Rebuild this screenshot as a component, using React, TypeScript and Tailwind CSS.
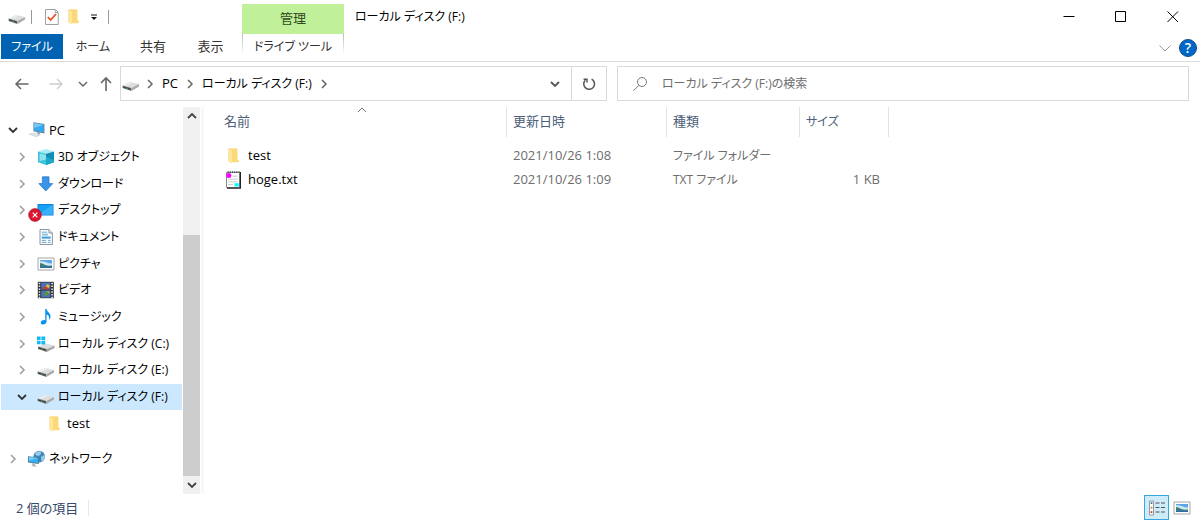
import type { ReactNode } from 'react';

type IconProps = { className?: string };

function DriveIcon({ className = 'size-[18px]' }: IconProps) {
  return (
    <svg viewBox="0 0 18 18" className={className} aria-hidden="true">
      <path d="M0.6 10.6 8.2 7 17 9 9.4 12.9Z" fill="#dedede" />
      <path d="M0.6 10.6 8.2 7 11 7.7 3.4 11.4Z" fill="#ececec" />
      <path d="M0.6 10.6 9.4 12.9V15.9L0.6 13Z" fill="#6e6e6e" />
      <path d="M1.2 11.6 8.6 13.7V14.8L1.2 12.5Z" fill="#3a3a3a" />
      <path d="M9.4 12.9 17 9V11.6L9.4 15.9Z" fill="#a9a9a9" />
      <path d="M4 12.6 6 13.2V14.1L4 13.5Z" fill="#2fae4a" />
    </svg>
  );
}

function SystemDriveIcon() {
  return (
    <svg viewBox="0 0 18 18" className="size-[18px]" aria-hidden="true">
      <path d="M1 11.4 9 8.4 17.6 10.4 9.8 14Z" fill="#dedede" />
      <path d="M1 11.4 9.8 14V16.9L1 14Z" fill="#6e6e6e" />
      <path d="M1.6 12.4 9 14.7V15.8L1.6 13.4Z" fill="#3a3a3a" />
      <path d="M9.8 14 17.6 10.4V13L9.8 16.9Z" fill="#a9a9a9" />
      <path d="M4 13.4 6 14V14.9L4 14.3Z" fill="#2fae4a" />
      <path d="M0 1.6H3.6V5H0ZM4.4 1.4H8.2V5H4.4ZM0 5.8H3.6V9.3H0ZM4.4 5.8H8.2V9.5H4.4Z" fill="#12b9f2" />
    </svg>
  );
}

function FolderIcon() {
  return (
    <svg viewBox="0 0 18 18" className="size-[18px]" aria-hidden="true">
      <path d="M3.5 1.5H12V13H13.4V15H5L3.5 14Z" fill="#f4cb62" />
      <path d="M6 2H12.4V12.6H13.4V15.2H6Z" fill="#fbd979" />
      <path d="M3.5 1.5 7 3.5V16.5L3.5 14.8Z" fill="#ffe69c" />
    </svg>
  );
}

function PcIcon() {
  return (
    <svg viewBox="0 0 18 18" className="size-[18px]" aria-hidden="true">
      <path d="M5.4 1.2 16.4 3V12.6L5.4 10.2Z" fill="#5f7d92" />
      <path d="M6.1 2.1 15.6 3.7V11.6L6.1 9.6Z" fill="#32a9f0" />
      <path d="M6.1 2.1 15.6 3.7 6.1 7Z" fill="#75c9f8" />
      <path d="M9 11 12 11.6V13.2L9 12.6Z" fill="#8c9aa3" />
      <path d="M0 13.3 5.4 11.5 13 13.8 8.4 16Z" fill="#c3ced6" />
      <path d="M1.8 13.3 5.5 12.2 10.8 13.8 8 15Z" fill="#e3eaee" />
    </svg>
  );
}

function CubeIcon() {
  return (
    <svg viewBox="0 0 18 18" className="size-[18px]" aria-hidden="true">
      <path d="M1 3.4 9 1 17 3.4 9 5.8Z" fill="#a9edf3" />
      <path d="M1 3.4 9 5.8V17L1 14.3Z" fill="#3cc4da" />
      <path d="M17 3.4 9 5.8V17L17 14.3Z" fill="#128fb4" />
      <path d="M2.6 5.2 9 7V11.5L2.6 13Z" fill="#8fe2ec" />
      <path d="M9 9 17 12V14.3L9 17Z" fill="#1fa9c8" />
    </svg>
  );
}

function DownloadIcon() {
  return (
    <svg viewBox="0 0 18 18" className="size-[18px]" aria-hidden="true">
      <path d="M5.4 1.8H12V8.6H15.8L8.8 16 1.8 8.6H5.4Z" fill="#3a95ea" stroke="#1f74c8" strokeWidth=".7" />
    </svg>
  );
}

function DesktopIcon() {
  return (
    <svg viewBox="-9 0 27 18" className="-ml-[9px] h-[18px] w-[27px] overflow-visible" aria-hidden="true">
      <path d="M0.5 3H16.5V14.5H0.5Z" fill="#0a7fd0" />
      <path d="M1.3 3.8H15.7V13.7H1.3Z" fill="#14a0f5" />
      <path d="M1.3 13.7 15.7 3.8V13.7Z" fill="#39b0fb" />
      <circle cx="-2" cy="14" r="6.4" fill="#da1631" stroke="#b20c24" strokeWidth=".6" />
      <path d="M-4.3 11.7 .3 16.3M.3 11.7-4.3 16.3" stroke="#fff" strokeWidth="1.2" />
    </svg>
  );
}

function DocumentIcon() {
  return (
    <svg viewBox="0 0 18 18" className="size-[18px]" aria-hidden="true">
      <path d="M3 1.5H12L15.4 5V16.5H3Z" fill="#f8fafb" stroke="#8d979e" />
      <path d="M12 1.5V5H15.4" fill="#dce4e8" stroke="#8d979e" />
      <path d="M4.8 4.2H10M4.8 12.4H9M4.8 14.4H9.5M11 12.4H13.6M11 14.4H13.6" stroke="#6fabd0" />
      <path d="M5 5.6H11V7.6H5Z" fill="#8fc7e8" />
      <path d="M4.8 8.6H13.6V10.6H4.8Z" fill="#3f9bd8" />
    </svg>
  );
}

function PictureIcon() {
  return (
    <svg viewBox="0 0 18 18" className="size-[18px]" aria-hidden="true">
      <path d="M1 3H17V15H1Z" fill="#fff" stroke="#a5a5a5" />
      <path d="M3 5H15V13H3Z" fill="#5ba7e4" />
      <path d="M3 6.5C6 5.5 10 8.4 15 8.6V11H3Z" fill="#cfe8f7" />
      <path d="M3 8C6 8.6 8.5 10.2 11.2 10.8L15 10.4V13H3Z" fill="#3f7d78" />
      <path d="M3 11.9H15V13H3Z" fill="#2a6db0" />
    </svg>
  );
}

function VideoIcon() {
  return (
    <svg viewBox="0 0 18 18" className="size-[18px]" aria-hidden="true">
      <path d="M0.8 0.8H16.8V17.2H0.8Z" fill="#2d2d2d" />
      <path d="M4.2 1.4H13.4V8.6H4.2ZM4.2 9.4H13.4V16.6H4.2Z" fill="#4a72c4" />
      <path d="M2.5 1.8V17M15.1 1.8V17" stroke="#eee" strokeWidth="1.6" strokeDasharray="1.5 1.3" />
      <path d="M8.4 5.6 10.2 3 13 4.6 11.6 7.2Z" fill="#e5b52b" />
      <path d="M5.2 6.8 8.4 5.2 12.8 8.2H6Z" fill="#c0402e" />
      <path d="M6.2 13.4 9.4 10 12.4 12.6 9 15.2Z" fill="#58933c" />
      <path d="M9.4 10 12.4 10.6V12.6Z" fill="#e5b52b" />
    </svg>
  );
}

function MusicIcon() {
  return (
    <svg viewBox="0 0 18 18" className="size-[18px]" aria-hidden="true">
      <path d="M8.2 1H9.6C9.8 4.3 14.4 5 13.4 9.8 13 11 12.4 11.6 11.8 12 12.8 9 11.8 7.4 9.6 6.6V13.6C9.4 15.6 7.6 16.8 5.6 16.6 3.4 16.2 3.2 13.8 5 12.6 6 12 7.2 11.9 8.2 12.2Z" fill="#0a93ee" />
    </svg>
  );
}

function NetworkIcon() {
  return (
    <svg viewBox="0 0 18 18" className="size-[18px]" aria-hidden="true">
      <circle cx="11.2" cy="6.6" r="5.8" fill="#3f86ba" />
      <path d="M7 3.4C8.4 1.4 11.4 .8 13.2 1.6 12.6 3.6 13.4 4.6 11.4 5.6 9.4 6.2 7.6 5.4 7 3.4ZM13 6.8 16.6 5C17.4 8 15.8 10.8 13.6 11.8Z" fill="#9acbe6" />
      <path d="M0 6.2 10.8 7.4V14L0 12.4Z" fill="#4a7893" />
      <path d="M0.8 7.1 10 8.1V13.1L0.8 11.7Z" fill="#35aff2" />
      <path d="M0.8 7.1 10 8.1 0.8 10.6Z" fill="#76cdf8" />
      <path d="M4.4 13 7 13.4V15.4L9 16.2 7 16.8 3 15.8 4.4 15.2Z" fill="#a9b6be" />
    </svg>
  );
}

function TextFileIcon() {
  return (
    <svg viewBox="0 0 18 20" className="h-5 w-[18px]" aria-hidden="true">
      <path d="M1.5 2.5H14.5V17.5H1.5Z" fill="#fff" stroke="#888" />
      <path d="M15.4 2V18.2H2" fill="none" stroke="#222" strokeWidth="1.2" />
      <path d="M2.5 2H15" stroke="#444" strokeWidth="1.6" strokeDasharray="1.2 1" />
      <path d="M7.5 6.2H12.5M3 9.2H12.5M3 11.8H12.5M3 14.6H8" stroke="#c9c9c9" />
      <circle cx="3.8" cy="5.6" r="2.5" fill="#f0f" />
      <path d="M9.4 13.2H13.8V16.4H9.4Z" fill="#0ff" />
    </svg>
  );
}

function PropertiesIcon() {
  return (
    <svg viewBox="0 0 14 16" className="h-4 w-3.5" aria-hidden="true">
      <path d="M.5 .5H10.5L13.2 3.2V15.5H.5Z" fill="#fff" stroke="#a0a0a0" />
      <path d="M10.2 .8V3.5H13" fill="none" stroke="#a0a0a0" />
      <path d="M2.8 8 5.6 11 11 5" fill="none" stroke="#e8501e" strokeWidth="1.8" />
    </svg>
  );
}

function Chevron({ direction, className }: { direction: 'right' | 'down' | 'up'; className: string }) {
  const paths = { right: 'M5 3 9 7 5 11', down: 'M3 5 7 9 11 5', up: 'M3 9 7 5 11 9' };
  return (
    <svg viewBox="0 0 14 14" className={`size-3.5 shrink-0 fill-none ${className}`} aria-hidden="true">
      <path d={paths[direction]} stroke="currentColor" />
    </svg>
  );
}

type Node = { label: string; icon: ReactNode; level: 0 | 1 | 2; open?: boolean; selected?: boolean; latin?: boolean };

const pcNodes: Node[] = [
  { label: 'PC', icon: <PcIcon />, level: 0, open: true, latin: true },
  { label: '3D オブジェクト', icon: <CubeIcon />, level: 1 },
  { label: 'ダウンロード', icon: <DownloadIcon />, level: 1 },
  { label: 'デスクトップ', icon: <DesktopIcon />, level: 1 },
  { label: 'ドキュメント', icon: <DocumentIcon />, level: 1 },
  { label: 'ピクチャ', icon: <PictureIcon />, level: 1 },
  { label: 'ビデオ', icon: <VideoIcon />, level: 1 },
  { label: 'ミュージック', icon: <MusicIcon />, level: 1 },
  { label: 'ローカル ディスク (C:)', icon: <SystemDriveIcon />, level: 1 },
  { label: 'ローカル ディスク (E:)', icon: <DriveIcon />, level: 1 },
  { label: 'ローカル ディスク (F:)', icon: <DriveIcon />, level: 1, open: true, selected: true },
  { label: 'test', icon: <FolderIcon />, level: 2, latin: true },
];

const indent = { 0: 'pl-[5px]', 1: 'pl-[14px]', 2: 'pl-[23px]' };

function TreeRow({ node }: { node: Node }) {
  return (
    <li className="ml-px">
      <a
        href="#"
        aria-current={node.selected ? 'page' : undefined}
        className={`flex h-full items-center whitespace-nowrap ${indent[node.level]} ${node.selected ? 'bg-[#cce8ff]' : ''}`}
      >
        {node.level === 2 ? (
          <span className="w-3.5 shrink-0" />
        ) : (
          <Chevron
            direction={node.open ? 'down' : 'right'}
            className={node.open ? 'stroke-[1.8] text-[#333]' : 'stroke-[1.6] text-[#a0a0a0]'}
          />
        )}
        <span className="ml-2 flex w-[18px] shrink-0 justify-end">{node.icon}</span>
        <span className={`ml-[3px] text-black ${node.latin ? 'text-[13px]' : 'text-xs'}`}>{node.label}</span>
      </a>
    </li>
  );
}

const files = [
  { name: 'test', icon: <FolderIcon />, date: '2021/10/26 1:08', kind: 'ファイル フォルダー', size: '' },
  { name: 'hoge.txt', icon: <TextFileIcon />, date: '2021/10/26 1:09', kind: 'TXT ファイル', size: '1 KB' },
];

function Header() {
  return (
    <header className="flex border-b border-[#dcdcdc]">
      <div className="w-[242px] shrink-0">
        <div className="flex h-[34px] items-center pl-2">
          <DriveIcon className="size-[18px]" />
          <span className="ml-[5px] h-3.5 w-px bg-[#999]" />
          <button aria-label="プロパティ" className="ml-[13px]">
            <PropertiesIcon />
          </button>
          <button aria-label="新しいフォルダー" className="ml-1.5">
            <FolderIcon />
          </button>
          <button aria-label="クイック アクセスのカスタマイズ" className="ml-1.5">
            <svg viewBox="0 0 10 10" className="size-2.5" aria-hidden="true">
              <path d="M2 3H8" stroke="#111" />
              <path d="M2 5H8L5 8Z" fill="#111" />
            </svg>
          </button>
          <span className="ml-[9px] h-3.5 w-px bg-[#999]" />
        </div>
        <nav aria-label="リボン" className="flex h-[27px] items-start pl-px text-xs text-[#333]">
          <button className="h-[25px] w-[62px] bg-[#0063b1] text-white">ファイル</button>
          <button className="h-[25px] w-[60px]">ホーム</button>
          <button className="h-[25px] w-[60px] text-[13px]">共有</button>
          <button className="h-[25px] w-[55px] text-[13px]">表示</button>
        </nav>
      </div>
      <div className="w-[102px] shrink-0 pt-1">
        <div className="flex h-[30px] items-center justify-center bg-[#c0f09a] text-[13px] text-[#2f4a20]">管理</div>
        <div className="flex h-[21px] justify-between">
          <span className="w-px bg-linear-to-b from-[#bbb] to-white" />
          <button className="h-[25px] whitespace-nowrap text-xs text-[#333]">ドライブ ツール</button>
          <span className="w-px bg-linear-to-b from-[#bbb] to-white" />
        </div>
      </div>
      <div className="min-w-0 flex-1">
        <div className="flex h-[34px] items-center justify-between pr-px pl-[11px]">
          <h1 className="truncate text-xs text-black">ローカル ディスク (F:)</h1>
          <div className="flex">
            <button aria-label="最小化" className="flex h-[34px] w-[52px] items-center justify-center">
              <svg viewBox="0 0 12 12" className="size-3 fill-none stroke-black"><path d="M.5 5.5H11.5" /></svg>
            </button>
            <button aria-label="最大化" className="flex h-[34px] w-[52px] items-center justify-center">
              <svg viewBox="0 0 12 12" className="size-3 fill-none stroke-black"><path d="M.5 .5H10.5V10.5H.5Z" /></svg>
            </button>
            <button aria-label="閉じる" className="flex h-[34px] w-[52px] items-center justify-center">
              <svg viewBox="0 0 12 12" className="size-3 fill-none stroke-black"><path d="M.5 .5 11 11M11 .5.5 11" /></svg>
            </button>
          </div>
        </div>
        <div className="flex h-[27px] items-center justify-end gap-2 pr-[3px]">
          <button aria-label="リボンの展開">
            <svg viewBox="0 0 12 12" className="size-3 fill-none stroke-[#999]"><path d="M.5 3.5 6 9 11.5 3.5" /></svg>
          </button>
          <button
            aria-label="ヘルプ"
            className="flex size-[18px] items-center justify-center rounded-full border border-[#0b4f91] bg-[#0067c8] text-sm font-semibold leading-none text-white"
          >
            ?
          </button>
        </div>
      </div>
    </header>
  );
}

function AddressRow() {
  return (
    <div className="flex h-[35px] shrink-0 pr-[11px]">
      <div className="flex w-[120px] shrink-0 items-center pl-[14px] text-[#666]">
        <button aria-label="戻る">
          <svg viewBox="0 0 16 16" className="size-4 fill-none stroke-current stroke-[1.5]"><path d="M14.5 8H2M7 3 2 8 7 13" /></svg>
        </button>
        <button aria-label="進む" className="ml-[18px] text-[#ccc]">
          <svg viewBox="0 0 16 16" className="size-4 fill-none stroke-current stroke-[1.3]"><path d="M1.5 8H14M9 3 14 8 9 13" /></svg>
        </button>
        <button aria-label="最近表示した場所" className="ml-3">
          <Chevron direction="down" className="stroke-[1.5]" />
        </button>
        <button aria-label="上へ" className="ml-2">
          <svg viewBox="0 0 16 16" className="size-4 fill-none stroke-current stroke-[1.6]"><path d="M8 15V2M3 7 8 2 13 7" /></svg>
        </button>
      </div>
      <div className="flex min-w-0 flex-485 border border-[#d9d9d9]">
        <nav aria-label="場所" className="flex min-w-0 flex-1 items-center pl-px whitespace-nowrap text-black">
          <DriveIcon className="size-[18px] shrink-0" />
          <Chevron direction="right" className="ml-[3px] stroke-[1.5] text-[#666]" />
          <a href="#" className="ml-[5px] text-[13px]">PC</a>
          <Chevron direction="right" className="ml-[5px] stroke-[1.5] text-[#666]" />
          <a href="#" className="ml-[5px] text-xs">ローカル ディスク (F:)</a>
          <Chevron direction="right" className="ml-[5px] stroke-[1.5] text-[#666]" />
          <button aria-label="以前の場所" className="mr-[9px] ml-auto text-[#555]">
            <Chevron direction="down" className="stroke-[1.8]" />
          </button>
        </nav>
        <button aria-label="最新の情報に更新" className="flex w-[35px] items-center justify-center border-l border-[#d9d9d9]">
          <svg viewBox="0 0 14 14" className="size-3.5 fill-none stroke-[#555] stroke-[1.5]">
            <path d="M9.6 2.1A5.4 5.4 0 1 1 3.2 3.2" />
            <path d="M1.6 2.2H5V5.6" />
          </svg>
        </button>
      </div>
      <label className="ml-[10px] flex min-w-0 flex-556 items-center border border-[#d9d9d9] pl-3.5">
        <svg viewBox="0 0 16 16" className="size-4 shrink-0 fill-none stroke-[#777]">
          <circle cx="10" cy="6" r="4.5" />
          <path d="M7 9.2 1.5 14.7" />
        </svg>
        <input
          type="search"
          aria-label="検索"
          placeholder="ローカル ディスク (F:)の検索"
          className="ml-3.5 min-w-0 flex-1 text-xs outline-none placeholder:text-[#6d6d6d]"
        />
      </label>
    </div>
  );
}

function Sidebar() {
  return (
    <aside className="flex w-[204px] shrink-0 border-r-3 border-[#f8f8f8]">
      <nav aria-label="フォルダー" className="w-[182px] overflow-hidden pt-2.5">
        <ul className="grid h-80 grid-rows-12">
          {pcNodes.map((node) => (
            <TreeRow key={node.label} node={node} />
          ))}
        </ul>
        <ul className="mt-2 grid h-[27px]">
          <TreeRow node={{ label: 'ネットワーク', icon: <NetworkIcon />, level: 0 }} />
        </ul>
      </nav>
      <div className="ml-px flex w-[17px] flex-col bg-[#f0f0f0] text-[#444]">
        <button aria-label="上へスクロール" className="flex h-[18px] items-center justify-center">
          <Chevron direction="up" className="stroke-[1.8]" />
        </button>
        <div className="flex-110" />
        <div className="flex-240 bg-[#cdcdcd]" />
        <button aria-label="下へスクロール" className="flex h-[18px] items-center justify-center">
          <Chevron direction="down" className="stroke-[1.8]" />
        </button>
      </div>
    </aside>
  );
}

function FileList() {
  const head = 'border-r border-[#e2e2e2] pl-1.5 text-left font-normal';
  return (
    <main className="min-w-0 flex-1 overflow-hidden">
      <table className="w-full table-fixed border-separate border-spacing-0 whitespace-nowrap">
        <colgroup>
          <col className="w-[303px]" />
          <col className="w-[160px]" />
          <col className="w-[133px]" />
          <col className="w-[89px]" />
          <col />
        </colgroup>
        <thead>
          <tr className="h-[30px] text-[13px] text-[#4c607a]">
            <th className="relative border-r border-[#e2e2e2] pl-5 text-left font-normal" aria-sort="ascending">
              名前
              <svg viewBox="0 0 10 6" className="absolute top-0 left-[153px] h-1.5 w-2.5 fill-none stroke-[#777]">
                <path d="M1 5 5 1 9 5" />
              </svg>
            </th>
            <th className={head}>更新日時</th>
            <th className={head}>種類</th>
            <th className={`${head} text-xs`}>サイズ</th>
            <td />
          </tr>
        </thead>
        <tbody className="text-[13px] text-[#6d6d6d]">
          <tr aria-hidden="true" className="h-[7px]"><td colSpan={5} /></tr>
          {files.map((file) => (
            <tr key={file.name} className="h-6">
              <td className="p-0 pl-[21px] text-black">
                <a href="#" className="flex h-6 items-center gap-[5px]">
                  {file.icon}
                  {file.name}
                </a>
              </td>
              <td className="p-0 pl-1.5">{file.date}</td>
              <td className="p-0 pl-1.5 text-xs">{file.kind}</td>
              <td className="p-0 pr-[9px] text-right">{file.size}</td>
              <td />
            </tr>
          ))}
        </tbody>
      </table>
    </main>
  );
}

function StatusBar() {
  return (
    <footer className="flex h-[27px] shrink-0 items-center justify-between pr-[9px] pl-4 text-[13px] text-[#34496b]">
      <span className="border-r border-[#e8e8e8] pr-2.5 leading-4">2 個の項目</span>
      <div className="flex items-center gap-1">
        <button aria-label="詳細" aria-pressed="true" className="flex size-[25px] items-center justify-center border border-[#3aa7dc] bg-[#cdebf8]">
          <svg viewBox="0 0 18 16" className="h-4 w-[18px]">
            <path d="M1.5 1H5.5V15H1.5Z" fill="#fff" stroke="#999" />
            <path d="M7.5 3H11.5M13 3H17M7.5 7.5H11.5M13 7.5H17M7.5 12H11.5M13 12H17" stroke="#555" />
            <path d="M2.6 2.2H4.4V4H2.6Z" fill="#467ca8" />
            <path d="M2.6 6.8H4.4V8.6H2.6Z" fill="#c68b42" />
            <path d="M2.6 11.2H4.4V13H2.6Z" fill="#d33a20" />
          </svg>
        </button>
        <button aria-label="大アイコン">
          <PictureIcon />
        </button>
      </div>
    </footer>
  );
}

export default function App() {
  return (
    <div className="flex h-screen flex-col bg-white font-['Open_Sans','Noto_Sans_CJK_JP',sans-serif] [font-feature-settings:'palt']" lang="ja">
      <Header />
      <div className="h-1 shrink-0" />
      <AddressRow />
      <div className="flex min-h-0 flex-1 pt-1.5">
        <Sidebar />
        <FileList />
      </div>
      <StatusBar />
    </div>
  );
}
